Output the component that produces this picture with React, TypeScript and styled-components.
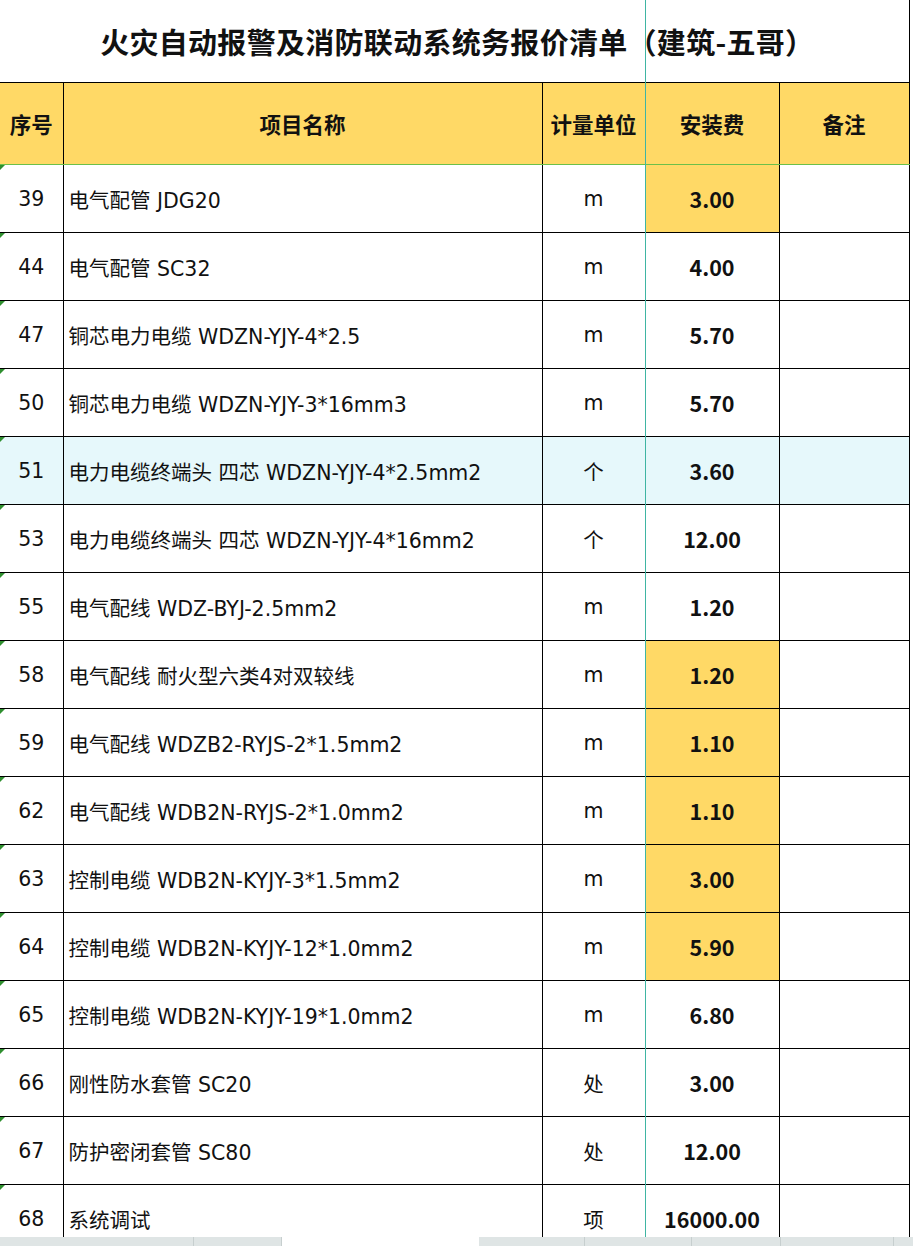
import styled, { createGlobalStyle } from 'styled-components';

const GlobalStyle = createGlobalStyle`
  html, body {
    margin: 0;
    padding: 0;
    background: #fff;
  }
  body {
    font-family: "Noto Sans CJK SC", "Noto Sans", sans-serif;
    color: #111;
    overflow: hidden;
  }
`;

type Row = {
  no: number;
  name: string;
  unit: string;
  fee: string;
  mark?: boolean;
  selected?: boolean;
};

const rows: Row[] = [
  { no: 39, name: '电气配管 JDG20', unit: 'm', fee: '3.00', mark: true },
  { no: 44, name: '电气配管 SC32', unit: 'm', fee: '4.00' },
  { no: 47, name: '铜芯电力电缆 WDZN-YJY-4*2.5', unit: 'm', fee: '5.70' },
  { no: 50, name: '铜芯电力电缆 WDZN-YJY-3*16mm3', unit: 'm', fee: '5.70' },
  { no: 51, name: '电力电缆终端头 四芯 WDZN-YJY-4*2.5mm2', unit: '个', fee: '3.60', selected: true },
  { no: 53, name: '电力电缆终端头 四芯 WDZN-YJY-4*16mm2', unit: '个', fee: '12.00' },
  { no: 55, name: '电气配线 WDZ-BYJ-2.5mm2', unit: 'm', fee: '1.20' },
  { no: 58, name: '电气配线 耐火型六类4对双较线', unit: 'm', fee: '1.20', mark: true },
  { no: 59, name: '电气配线 WDZB2-RYJS-2*1.5mm2', unit: 'm', fee: '1.10', mark: true },
  { no: 62, name: '电气配线 WDB2N-RYJS-2*1.0mm2', unit: 'm', fee: '1.10', mark: true },
  { no: 63, name: '控制电缆 WDB2N-KYJY-3*1.5mm2', unit: 'm', fee: '3.00', mark: true },
  { no: 64, name: '控制电缆 WDB2N-KYJY-12*1.0mm2', unit: 'm', fee: '5.90', mark: true },
  { no: 65, name: '控制电缆 WDB2N-KYJY-19*1.0mm2', unit: 'm', fee: '6.80' },
  { no: 66, name: '刚性防水套管 SC20', unit: '处', fee: '3.00' },
  { no: 67, name: '防护密闭套管 SC80', unit: '处', fee: '12.00' },
  { no: 68, name: '系统调试', unit: '项', fee: '16000.00' },
];

const Page = styled.div`
  position: relative;
  width: 913px;
  height: 1246px;
  display: flex;
  flex-direction: column;
  overflow: hidden;
`;

const Sheet = styled.div`
  height: 1237px;
  overflow: hidden;
`;

const Grid = styled.table`
  border-collapse: collapse;
  table-layout: fixed;
  width: 909px;
`;

const TitleCell = styled.td`
  height: 82px;
  padding: 0 0 0 6px;
  text-align: center;
  font-size: 29px;
  font-weight: 700;
  letter-spacing: 0.3px;
  border-right: 1px solid #000;
  border-bottom: 1px solid #000;
`;

const HeadCell = styled.th`
  height: 81px;
  padding: 0;
  background: #ffd966;
  font-size: 21.5px;
  font-weight: 700;
  text-align: center;
  border: 1px solid #000;
  border-bottom: 1px solid #6cc04a;
  &:first-child {
    border-left: none;
  }
`;

const BodyRow = styled.tr<{ $selected?: boolean }>`
  height: 68px;
  background: ${p => (p.$selected ? '#e6f8fb' : '#fff')};
`;

const Cell = styled.td<{ $align?: 'left' | 'center'; $fill?: boolean }>`
  position: relative;
  padding: 0 0 0 ${p => (p.$align === 'left' ? '5px' : '0')};
  border: 1px solid #000;
  text-align: ${p => p.$align ?? 'center'};
  font-family: "DejaVu Sans", "Noto Sans CJK SC", sans-serif;
  font-size: 20.5px;
  background: ${p => (p.$fill ? '#ffd966' : 'transparent')};
  white-space: nowrap;
  overflow: hidden;
`;

const FeeCell = styled(Cell)`
  font-family: "Noto Sans CJK SC", "Noto Sans", sans-serif;
  font-size: 21.5px;
  font-weight: 700;
`;

const NoCell = styled(Cell)`
  border-left: none;
  &::before {
    content: '';
    position: absolute;
    left: 0;
    top: 0;
    width: 0;
    height: 0;
    border-top: 5px solid #2f8f2f;
    border-right: 5px solid transparent;
  }
`;

const FreezeLine = styled.div`
  position: absolute;
  left: 645px;
  top: 0;
  width: 1px;
  height: 1237px;
  background: #3fb5a3;
  pointer-events: none;
`;

const TabBar = styled.div`
  height: 9px;
  display: flex;
  background: #dfe5e5;
`;

const Tab = styled.div<{ $w: number; $active?: boolean }>`
  width: ${p => p.$w}px;
  flex: none;
  background: ${p => (p.$active ? '#fff' : 'transparent')};
  border-right: ${p => (p.$active ? 'none' : '1px solid #c7cfcf')};
`;

export default function App() {
  return (
    <>
      <GlobalStyle />
      <Page>
        <Sheet>
          <Grid>
            <colgroup>
              <col style={{ width: 63 }} />
              <col style={{ width: 479 }} />
              <col style={{ width: 103 }} />
              <col style={{ width: 134 }} />
              <col style={{ width: 130 }} />
            </colgroup>
            <tbody>
              <tr>
                <TitleCell colSpan={5}>火灾自动报警及消防联动系统务报价清单（建筑-五哥）</TitleCell>
              </tr>
              <tr>
                <HeadCell>序号</HeadCell>
                <HeadCell>项目名称</HeadCell>
                <HeadCell>计量单位</HeadCell>
                <HeadCell>安装费</HeadCell>
                <HeadCell>备注</HeadCell>
              </tr>
              {rows.map(r => (
                <BodyRow key={r.no} $selected={r.selected}>
                  <NoCell>{r.no}</NoCell>
                  <Cell $align="left">{r.name}</Cell>
                  <Cell>{r.unit}</Cell>
                  <FeeCell $fill={r.mark}>{r.fee}</FeeCell>
                  <Cell />
                </BodyRow>
              ))}
            </tbody>
          </Grid>
        </Sheet>
        <TabBar>
          <Tab $w={193} />
          <Tab $w={87} />
          <Tab $w={197} $active />
          <Tab $w={105} />
          <Tab $w={106} />
          <Tab $w={88} />
          <Tab $w={112} />
        </TabBar>
        <FreezeLine />
      </Page>
    </>
  );
}
